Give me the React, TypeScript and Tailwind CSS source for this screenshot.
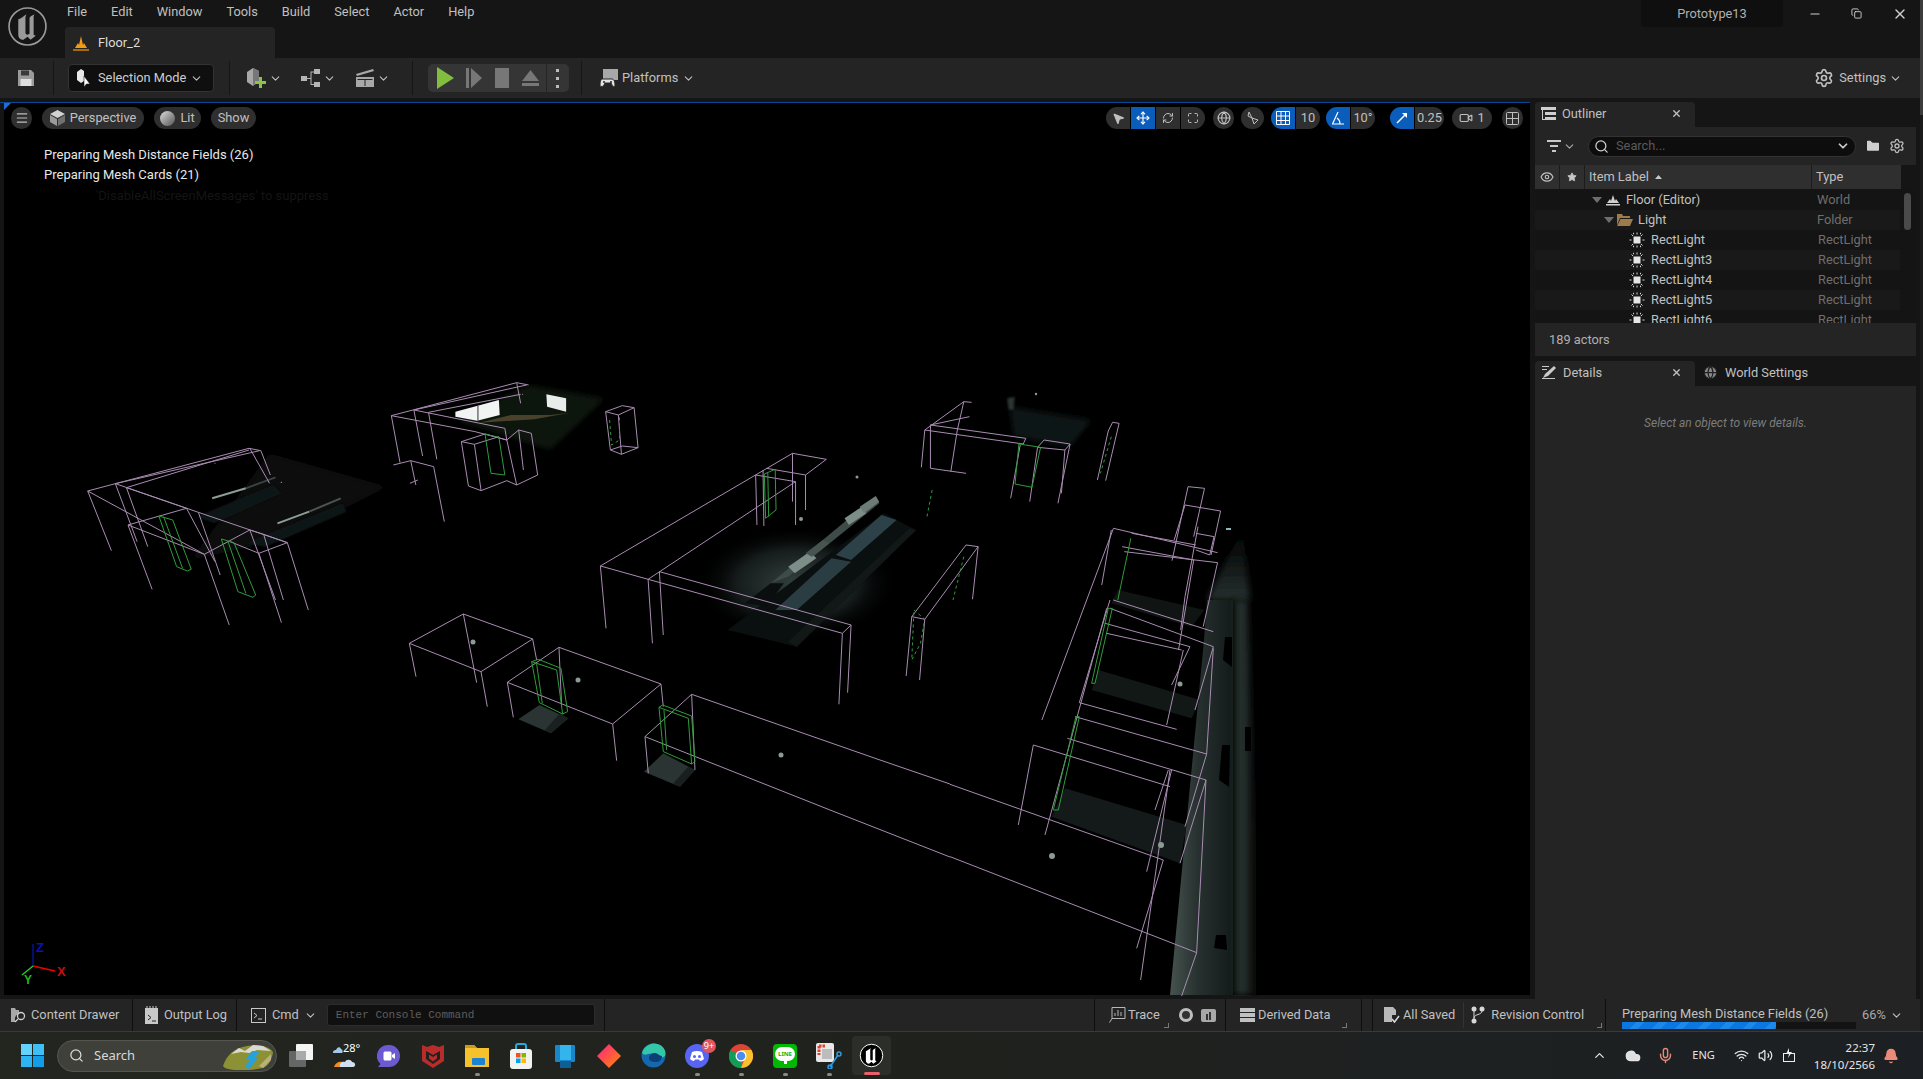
import React from "react";
import {
  ChevronDown,
  ChevronUp,
  Eye,
  Globe,
  Maximize,
  Menu,
  Minus,
  MousePointer2,
  Move,
  RefreshCw,
  Search,
  Settings,
  Star,
  Video,
  Volume2,
  Wifi,
  X,
  Mic,
  Bell,
  Copy,
  FolderPlus,
  Cloud,
} from "lucide-react";

/* ================= SCENE DATA (points are in crop space, see groups below) ================= */
const PURPLE = "#a98cb2";
const GREEN = "#2f9c3c";

const leftRoomLines = [
  "70,393 478,265 508,272",
  "140,371 505,272",
  "168,383 478,270",
  "70,393 365,583 480,510",
  "140,371 350,457 575,548 503,580 430,545",
  "168,383 320,445 172,495 365,583",
  "515,523 480,510",
  "515,523 575,548",
  "70,393 130,572",
  "140,371 195,545",
  "168,383 222,560",
  "172,495 233,688",
  "320,445 392,605",
  "350,457 405,645",
  "365,583 428,795",
  "503,580 560,788",
  "575,548 628,750",
  "515,523 565,720",
  "480,510 545,720",
  "480,265 530,370",
  "508,272 532,345",
  "838,167 1155,68 1185,75",
  "895,150 1180,75",
  "932,157 1165,103",
  "838,167 1050,215 1130,240",
  "895,150 1125,205 1130,240",
  "838,167 860,308",
  "895,150 917,288",
  "932,157 953,298",
  "1155,68 1165,130",
  "1015,245 1075,222 1130,240 1160,210 1192,220 1208,345 1155,375 1130,362 1065,392 1033,378 1015,245",
  "1015,245 1048,253 1110,230",
  "1048,253 1065,392",
  "1130,240 1155,375",
  "1160,210 1172,330",
  "843,315 887,302 945,320 972,485",
  "887,302 900,375",
  "885,370 905,360",
  "1380,155 1422,137 1452,143 1462,263 1420,283 1392,270 1380,155",
  "1380,155 1412,165 1452,143",
  "1412,165 1420,283",
  "1392,270 1422,258 1462,263",
];
const leftRoomGreen = [
  "250,468 285,480 332,628 322,633 295,620 250,468",
  "262,470 310,625",
  "408,537 440,548 495,705 488,712 450,695 408,537",
  "425,545 470,700",
  "1075,222 1110,232 1125,345 1090,340 1075,222",
];

const centerLines = [
  "47,588 490,250 568,268 520,315 430,295",
  "157,628 497,335",
  "47,588 157,628",
  "183,605 625,765",
  "157,628 605,790 625,765",
  "47,588 60,775",
  "157,628 167,820",
  "183,605 192,795",
  "605,790 597,1003",
  "625,765 617,968",
  "405,315 408,465",
  "422,300 424,468",
  "490,250 490,395",
  "520,315 520,420",
  "497,335 497,465",
  "405,315 497,335",
  "765,740 890,525 918,530 795,748 765,740",
  "765,740 752,918",
  "795,748 783,930",
  "918,530 905,688",
  "795,180 885,95 903,97",
  "808,165 898,140",
  "795,180 1022,222 1028,205 808,165",
  "795,180 787,292",
  "808,165 808,295 890,310",
  "885,95 870,180 855,305",
  "1070,210 1130,222 1118,240 1055,232 1070,210",
  "1130,222 1102,400",
  "1118,240 1110,370",
  "1055,232 1037,395",
  "1015,225 993,385",
  "1218,183 1228,157 1243,160 1212,332",
  "1218,183 1193,330",
  "1402,350 1440,355 1415,500",
  "1402,350 1365,572",
  "1395,405 1477,423 1455,555",
  "1395,405 1370,510",
  "1420,490 1462,500 1452,555 1420,540",
  "1230,475 1065,1050",
  "1230,475 1470,548",
  "1272,490 1420,525",
  "1250,530 1415,570",
  "1255,545 1470,578",
  "1470,578 1437,770",
  "1425,470 1395,680 1385,780",
  "1415,570 1380,840",
  "1225,480 1203,645",
];
const centerGreen = [
  "425,312 450,298 452,420 428,445 425,312",
  "433,308 435,440",
  "1012,222 1062,232 1042,352 1003,342 1012,222",
  "1270,505 1240,690",
];
const centerGreenDash = [
  "770,720 795,748 785,820 765,870 770,720",
  "885,560 860,690",
  "812,360 800,440",
  "1225,200 1200,310",
];

const rightLines = [
  "250,435 205,675",
  "250,435 660,560",
  "388,308 680,388",
  "375,350 770,462",
  "352,415 768,540",
  "0,553 640,780",
  "0,770 740,1058 695,1188",
  "768,540 740,1058",
  "770,462 705,680",
  "768,540 690,790",
  "790,140 735,330",
  "790,145 770,462",
  "490,0 790,95",
  "480,25 790,140",
  "465,70 720,140",
  "470,100 695,150",
  "470,25 285,705",
  "660,510 572,1140",
  "640,780 560,1045",
  "700,150 650,375",
  "665,510 590,815",
  "655,510 615,630",
  "720,140 665,255",
  "480,0 388,308",
];
const rightGreen = [
  "475,25 425,250 435,250 487,25 475,25",
  "378,350 310,630 325,630 388,350 378,350",
];

const boxLines = [
  "88,160 250,72 458,147 303,245 88,160",
  "88,160 108,260",
  "250,72 290,278",
  "303,245 322,350",
  "458,147 470,210",
  "382,277 537,172 843,282 698,402 382,277",
  "382,277 400,382",
  "537,172 545,350",
  "698,402 710,512",
  "843,282 850,350",
  "795,440 935,313 1500,510 1710,582",
  "795,440 1350,660 1710,801",
  "795,440 805,550",
  "935,313 945,540",
];
const boxGreen = [
  "455,215 475,208 543,235 563,365 548,372 478,338 455,215",
  "455,215 530,240 548,372",
  "470,222 487,340",
  "837,352 848,345 935,378 945,515 935,522 850,485 837,352",
  "837,352 925,385 935,522",
  "852,360 860,480",
];

function Wires({ lines, color, dash }: { lines: string[]; color: string; dash?: string }) {
  return (
    <>
      {lines.map((p, i) => (
        <polyline
          key={i}
          points={p}
          fill="none"
          stroke={color}
          strokeWidth={1}
          strokeDasharray={dash}
          vectorEffect="non-scaling-stroke"
        />
      ))}
    </>
  );
}

function Dot({ x, y, r = 2.5 }: { x: number; y: number; r?: number }) {
  return <circle cx={x} cy={y} r={r} fill="#8d9a96" />;
}

/* ================= VIEWPORT DRAWING ================= */
function Scene() {
  return (
    <svg className="absolute inset-0" width={1526} height={893} viewBox="4 103 1526 893">
      <defs>
        <filter id="soft" x="-30%" y="-30%" width="160%" height="160%">
          <feGaussianBlur stdDeviation="9" />
        </filter>
        <filter id="softer" x="-30%" y="-30%" width="160%" height="160%">
          <feGaussianBlur stdDeviation="3" />
        </filter>
        <linearGradient id="wall" x1="0" y1="0" x2="1" y2="0">
          <stop offset="0" stopColor="#46534f" />
          <stop offset="0.45" stopColor="#26302e" />
          <stop offset="1" stopColor="#141b1a" />
        </linearGradient>
        <linearGradient id="wall2" x1="0" y1="0" x2="1" y2="0">
          <stop offset="0" stopColor="#1a2220" />
          <stop offset="0.35" stopColor="#2a3432" />
          <stop offset="1" stopColor="#000" />
        </linearGradient>
        <linearGradient id="wallTop" x1="0" y1="1" x2="0" y2="0">
          <stop offset="0" stopColor="#26302e" />
          <stop offset="1" stopColor="#000" />
        </linearGradient>
        <radialGradient id="glow">
          <stop offset="0" stopColor="#33413f" />
          <stop offset="0.6" stopColor="#161c1c" />
          <stop offset="1" stopColor="#000" stopOpacity="0" />
        </radialGradient>
      </defs>

      {/* long wall on the right */}
      <polygon points="1226,560 1243,530 1250,600 1207,600" fill="url(#wallTop)" filter="url(#softer)" />
      <polygon points="1170,995 1204,640 1207,600 1233,600 1233,995" fill="url(#wall)" />
      <polygon points="1234,600 1248,600 1255,830 1257,995 1234,995" fill="url(#wall2)" filter="url(#softer)" />
      <g fill="#000">
        <polygon points="1225,637 1232,637 1232,667 1223,660" />
        <polygon points="1222,745 1230,745 1229,787 1219,780" />
        <polygon points="1216,935 1226,935 1227,950 1214,948" />
        <rect x="1245" y="727" width="6" height="24" />
      </g>

      {/* dim room floors */}
      <g transform="translate(950 600) scale(0.3333)">
        <polygon points="445,210 750,300 725,355 425,270" fill="#121816" />
        <polygon points="345,565 710,675 690,790 305,650" fill="#141a19" />
      </g>
      <g transform="translate(580 370) scale(0.4337 0.3333)">
        <polygon points="1240,660 1440,720 1410,770 1225,700" fill="#101513" />
        <polygon points="990,110 1180,150 1130,230 1000,200" fill="#111615" filter="url(#soft)" />
        <polygon points="985,85 1002,80 1000,120 988,118" fill="#2a3532" filter="url(#softer)" />

        {/* lit central room */}
        <ellipse cx="500" cy="640" rx="230" ry="170" fill="url(#glow)" />
        <polygon points="340,780 700,430 775,480 500,830" fill="#0a0f0f" />
        <polygon points="590,555 695,435 730,450 625,570" fill="#2d4149" />
        <polygon points="450,720 580,565 625,575 500,720" fill="#2a3d43" />
        <polygon points="500,830 775,480 760,475 480,815" fill="#121816" />
        <polygon points="440,640 680,380 690,400 480,620" fill="#3e4b48" />
        <polygon points="380,700 440,640 470,640 430,710" fill="#0a0e0e" />
        <polygon points="480,590 530,545 545,565 495,610" fill="#7d8d88" />
        <polygon points="520,550 560,510 575,520 535,560" fill="#48544f" />
        <polygon points="610,445 650,410 660,430 620,465" fill="#7d8d88" />
        <polygon points="645,410 682,378 690,395 655,430" fill="#6d7c77" />
      </g>

      {/* left rooms */}
      <g transform="translate(60 360) scale(0.3954 0.3333)">
        <polygon points="530,280 830,380 560,540 330,600" fill="#080c0b" filter="url(#soft)" />
        <polygon points="345,470 540,375 560,400 390,490" fill="#0d1414" filter="url(#softer)" />
        <polygon points="470,550 715,430 725,455 520,560" fill="#0d1414" filter="url(#softer)" />
        <polyline points="385,415 470,385" stroke="#8d9c97" strokeWidth={2} fill="none" vectorEffect="non-scaling-stroke" />
        <polyline points="470,385 545,352" stroke="#3a4442" strokeWidth={2} fill="none" vectorEffect="non-scaling-stroke" />
        <polyline points="550,490 630,455" stroke="#8d9c97" strokeWidth={2} fill="none" vectorEffect="non-scaling-stroke" />
        <polyline points="630,455 710,415" stroke="#4a5552" strokeWidth={2} fill="none" vectorEffect="non-scaling-stroke" />

        {/* top room with the bright windows */}
        <polygon points="1185,75 1380,115 1240,270 1000,180" fill="#0e1211" filter="url(#soft)" />
        <polygon points="1060,188 1140,165 1240,165 1290,158 1200,178" fill="#4a412c" />
        <polygon points="1000,155 1110,120 1112,165 1055,182 1000,170" fill="#f2f4f3" />
        <polygon points="1230,103 1280,115 1280,155 1232,140" fill="#e8ecea" />
        <line x1="1057" y1="138" x2="1057" y2="182" stroke="#333" vectorEffect="non-scaling-stroke" />
        <Wires lines={leftRoomLines} color={PURPLE} />
        <Wires lines={leftRoomGreen} color={GREEN} />
        <Wires lines={["1390,180 1395,255 1415,240 1415,170"]} color={GREEN} dash="3 3" />
        <Dot x={392} y={310} r={1.5} />
        <Dot x={560} y={367} r={2} />
        <Dot x={1170} y={103} r={1.5} />
      </g>

      <g transform="translate(580 370) scale(0.4337 0.3333)">
        <Wires lines={centerLines} color={PURPLE} />
        <Wires lines={centerGreen} color={GREEN} />
        <Wires lines={centerGreenDash} color={GREEN} dash="3 3" />
      </g>
      <Dot x={857} y={477} r={1.5} />
      <Dot x={801} y={519} r={2} />
      <Dot x={1036} y={394} r={1.2} />
      <rect x="1226" y="528" width="5" height="2" fill="#8fb5bd" />

      <g transform="translate(950 600) scale(0.3333)">
        <Wires lines={rightLines} color={PURPLE} />
        <Wires lines={rightGreen} color={GREEN} />
      </g>
      <Dot x={1180} y={684} r={2.5} />
      <Dot x={1161} y={845} r={3} />
      <Dot x={1052} y={856} r={3} />

      <g transform="translate(380 590) scale(0.3333)">
        <polygon points="415,388 478,345 565,385 513,430" fill="#2a3432" />
        <polygon points="513,430 565,385 540,370 495,420" fill="#1a201f" />
        <polygon points="792,545 850,490 945,540 900,590" fill="#2a3432" />
        <polygon points="900,590 945,540 925,530 880,580" fill="#191f1e" />
        <Wires lines={boxLines} color={PURPLE} />
        <Wires lines={boxGreen} color={GREEN} />
      </g>
      <Dot x={473} y={642} r={2.5} />
      <Dot x={578} y={680} r={2.5} />
      <Dot x={781} y={755} r={2.5} />

      {/* axis gizmo */}
      <line x1="33" y1="966" x2="33" y2="944" stroke="#0b1bd6" strokeWidth={1} />
      <line x1="33" y1="966" x2="55" y2="971" stroke="#e00" strokeWidth={1.4} />
      <line x1="33" y1="966" x2="22" y2="975" stroke="#1fd31f" strokeWidth={1.4} />
      <text x="36" y="952" fill="#0a14b8" fontSize="13" fontFamily="Liberation Sans" fontWeight="700">Z</text>
      <text x="57" y="976" fill="#c41010" fontSize="13" fontFamily="Liberation Sans" fontWeight="700">X</text>
      <text x="24" y="984" fill="#1fb81f" fontSize="12" fontFamily="Liberation Sans" fontWeight="700">Y</text>
    </svg>
  );
}

/* ================= SMALL ICONS ================= */
function UnrealLogo({ size, ring = "#9a9a9a", fg = "#9a9a9a", bg = "transparent" }: { size: number; ring?: string; fg?: string; bg?: string }) {
  return (
    <svg width={size} height={size} viewBox="0 0 40 40">
      <circle cx="20" cy="20" r="18" fill={bg} stroke={ring} strokeWidth="1.6" />
      <path
        d="M11 13c3-1 5-3 8-5-1 2-1 3-1 5v13c0 1 1 2 2 2l2-1V12c0-1 1-2 3-3l2-1c-1 1-1 2-1 4v16l2 1-5 4-3-3-4 3c-3 0-5-2-5-5V15z"
        fill={fg}
      />
    </svg>
  );
}

function SaveIcon() {
  return (
    <svg width="18" height="18" viewBox="0 0 18 18">
      <path d="M1 1h13l3 3v13H1z" fill="#9b9b9b" />
      <rect x="4" y="1.5" width="8" height="5" fill="#3a3a3a" />
      <rect x="3.5" y="10" width="11" height="7" fill="#dedede" />
    </svg>
  );
}

function SelectionIcon() {
  return (
    <svg width="16" height="20" viewBox="0 0 16 20">
      <path d="M1 4l4-3 3 2v10l-3 2-4-3z" fill="#e8e8e8" />
      <path d="M8 8v11l2.500-3 3.500 0z" fill="#fff" stroke="#111" strokeWidth="0.6" />
    </svg>
  );
}

function AddActorIcon() {
  return (
    <svg width="22" height="22" viewBox="0 0 22 22">
      <path d="M2 5l6-4 6 3v10l-6 5-6-4z" fill="#a8a8a8" />
      <path d="M8 1l6 3v10l-6 5z" fill="#777" />
      <path d="M14 10h3v4h4v3h-4v4h-3v-4h-4v-3h4z" fill="#8bc34a" />
    </svg>
  );
}

function BlueprintIcon() {
  return (
    <svg width="20" height="18" viewBox="0 0 20 18" fill="#b5b5b5">
      <rect x="0" y="7" width="6" height="5" />
      <rect x="13" y="0" width="6" height="5" />
      <rect x="13" y="13" width="6" height="5" />
      <path d="M6 9h3.500V2.500H13v1h-2.500V9.500h0V15H13v1H9.500V10H6z" />
    </svg>
  );
}

function CinematicIcon() {
  return (
    <svg width="20" height="20" viewBox="0 0 20 20" fill="#a8a8a8">
      <path d="M1 6l17-5 1 2-17 5z" />
      <rect x="1" y="9" width="18" height="10" />
      <rect x="2.500" y="11" width="15" height="1" fill="#242424" />
      <rect x="9.500" y="12" width="1" height="6" fill="#242424" />
    </svg>
  );
}

function PlatformsIcon() {
  return (
    <svg width="20" height="20" viewBox="0 0 20 20">
      <rect x="4" y="1" width="15" height="11" fill="#a8a8a8" />
      <path d="M3 11h10c2 0 3 3 3 6 0 2-2 2-3 0l-1-2H6l-1 2c-1 2-4 2-4 0 0-3 1-6 2-6z" fill="#e2e2e2" stroke="#242424" />
      <circle cx="5" cy="14" r="1" fill="#242424" />
      <circle cx="12" cy="14" r="1" fill="#242424" />
    </svg>
  );
}

function LandscapeIcon() {
  return (
    <svg width="14" height="12" viewBox="0 0 14 12" fill="#cfcfcf">
      <path d="M1 9l3-4 1 2 2-6 2 6 1-2 3 4z" />
      <rect x="0" y="10" width="14" height="1.500" />
    </svg>
  );
}

function LightIcon() {
  return (
    <svg width="16" height="16" viewBox="0 0 16 16" stroke="#d5d5d5" strokeWidth="1" fill="none">
      <rect x="4.500" y="4.500" width="7" height="7" fill="#e6e6e6" stroke="none" />
      <path d="M8 0.500v2M8 13.500v2M0.500 8h2M13.500 8h2M2.500 2.500l1.500 1.500M13.500 2.500l-1.500 1.500M2.500 13.500l1.500-1.500M13.500 13.500l-1.500-1.500M4.500 0.800v1.500M11.500 0.800v1.500M4.500 13.700v1.500M11.500 13.700v1.500" />
    </svg>
  );
}

function OutlinerIcon() {
  return (
    <svg width="15" height="15" viewBox="0 0 15 15" fill="#cfcfcf">
      <rect x="0" y="1" width="15" height="3" />
      <rect x="4" y="6" width="11" height="3" />
      <rect x="4" y="11" width="11" height="3" />
      <path d="M1 4h1v9h2v1H1z" />
    </svg>
  );
}

function DetailsIcon() {
  return (
    <svg width="16" height="15" viewBox="0 0 16 15" fill="#c9c9c9">
      <rect x="2" y="1" width="7" height="1" />
      <rect x="2" y="4" width="5" height="1" />
      <rect x="2" y="13" width="13" height="1" />
      <path d="M14 1l2 2-8 8-4 1.500-1.500 1.500 1-2 1.500-3z" />
    </svg>
  );
}

function StatusSep() {
  return <div className="w-px self-stretch bg-[#0e0e0e]" />;
}

/* ================= TASKBAR ICONS ================= */
function TaskIcon({ children, dot }: { children: React.ReactNode; dot?: boolean }) {
  return (
    <div className="relative flex h-full w-[44px] items-center justify-center">
      {children}
      {dot && <div className="absolute bottom-[3px] h-[3px] w-[5px] rounded-full bg-[#8a8a8a]" />}
    </div>
  );
}

function Taskbar() {
  return (
    <div className="flex h-[47px] items-center bg-gradient-to-r from-[#23261f] via-[#1f211d] to-[#1c2024] text-white font-['Noto_Sans',sans-serif]">
      <div className="ml-[21px] grid h-[23px] w-[23px] grid-cols-2 gap-[1px]">
        <div className="bg-[#63d3fb]" />
        <div className="bg-[#3cc0f6]" />
        <div className="bg-[#2eb4f2]" />
        <div className="bg-[#129de6]" />
      </div>
      <div className="ml-[13px] flex h-[32px] w-[220px] items-center rounded-full border border-[#54564f] bg-[#3e4039] pl-[11px] pr-[3px]">
        <Search size={15} className="text-[#dcdcdc]" />
        <span className="ml-[10px] text-[13px] text-[#d8d8d8]">Search</span>
        <svg className="ml-auto" width="50" height="28" viewBox="0 0 50 28">
          <path d="M0 24C4 12 12 6 24 4s22 0 26 6c-1 8-5 14-10 16-14 3-30 3-38 0z" fill="#8c9136" />
          <path d="M8 12l8-6 6 3 8-6 10 1 8 5-14-1-8 3-8-1z" fill="#dad8d2" />
          <path d="M22 24l6-7-5 0 6-8 8 0-5 6 4 0-10 12z" fill="#25a3d8" />
          <path d="M36 24l12-12 0 6-8 8z" fill="#b9b07c" />
        </svg>
      </div>
      <div className="ml-[2px] flex h-full items-center">
        <TaskIcon>
          <svg width="25" height="23" viewBox="0 0 25 23">
            <rect x="0" y="7" width="17" height="16" rx="1" fill="#666" />
            <rect x="7" y="0" width="17" height="16" rx="1" fill="#f4f4f4" />
            <rect x="7" y="7" width="10" height="9" fill="#a9a9a9" />
          </svg>
        </TaskIcon>
        <TaskIcon>
          <div className="relative h-[26px] w-[26px]">
            <svg className="absolute left-0 top-0" width="26" height="26" viewBox="0 0 26 26">
              <path d="M1 10c0-3 2-3 3-3 1-3 4-4 5-1 2 0 2 4 1 4z" fill="#a4c6e8" />
              <path d="M2 24c1-4 5-6 8-5l-2 5z" fill="#f08c1e" />
              <path d="M8 24c-1-4 2-6 5-5 1-3 6-3 7 0 4 0 4 5 1 5z" fill="#cfe0f0" />
            </svg>
            <span className="absolute left-[11px] top-[-2px] text-[11px] leading-[14px]">28°</span>
          </div>
        </TaskIcon>
        <TaskIcon>
          <svg width="24" height="24" viewBox="0 0 24 24">
            <path d="M12 1a11 11 0 0 1 0 22H1l2.500-3A11 11 0 0 1 12 1z" fill="#6b5bd0" />
            <rect x="6.500" y="7.500" width="8" height="9" rx="1.500" fill="#fff" />
            <path d="M15 11l3-2v6l-3-2z" fill="#fff" />
          </svg>
        </TaskIcon>
        <TaskIcon>
          <svg width="22" height="24" viewBox="0 0 22 24">
            <path d="M0 1l5 2 6-2 6 2 5-2v16l-11 7L0 17z" fill="#b82c2c" />
            <path d="M4 7l7 4 7-4v8l-7 5-7-5z" fill="#1f211d" />
            <path d="M7 10.500l4 2.500 4-2.500v4l-4 3-4-3z" fill="#b82c2c" />
          </svg>
        </TaskIcon>
        <TaskIcon dot>
          <svg width="24" height="23" viewBox="0 0 24 23">
            <path d="M0 1h9l3 3h12v19H0z" fill="#f5c22d" />
            <path d="M0 1h9l3 3H0z" fill="#c99a1c" />
            <rect x="7" y="14" width="13" height="7" rx="1" fill="#1c83d2" />
          </svg>
        </TaskIcon>
        <TaskIcon>
          <svg width="24" height="26" viewBox="0 0 24 26">
            <path d="M7 6V3q0-2 2-2h6q2 0 2 2v3" fill="none" stroke="#29a8e0" strokeWidth="2" />
            <rect x="1" y="6" width="22" height="20" rx="3" fill="#f2f2f2" />
            <rect x="7" y="10" width="4.500" height="4.500" fill="#f25022" />
            <rect x="12.500" y="10" width="4.500" height="4.500" fill="#7fba00" />
            <rect x="7" y="15.500" width="4.500" height="4.500" fill="#00a4ef" />
            <rect x="12.500" y="15.500" width="4.500" height="4.500" fill="#ffb900" />
          </svg>
        </TaskIcon>
        <TaskIcon>
          <svg width="24" height="24" viewBox="0 0 24 24">
            <rect x="2" y="1" width="20" height="17" rx="1" fill="#1a86c8" />
            <rect x="7" y="1" width="11" height="15" fill="#33b4ec" />
            <rect x="7" y="17" width="11" height="7" fill="#0f5e96" />
          </svg>
        </TaskIcon>
        <TaskIcon>
          <svg width="24" height="24" viewBox="0 0 24 24">
            <defs>
              <linearGradient id="gem" x1="0" y1="0" x2="1" y2="1">
                <stop offset="0" stopColor="#ff1f8a" />
                <stop offset="1" stopColor="#ff8a00" />
              </linearGradient>
            </defs>
            <path d="M12 0l12 12-12 12L0 12z" fill="url(#gem)" />
          </svg>
        </TaskIcon>
        <TaskIcon>
          <svg width="25" height="25" viewBox="0 0 25 25">
            <circle cx="12.500" cy="12.500" r="12" fill="#1568ab" />
            <path d="M1 10C3 3 9 .5 13 .5c6 0 11.500 4 11.500 10 0 4-4 5-7 4-3-1-3-4-7-4-4 0-7 3-9.500-.5z" fill="#34c6a8" />
            <path d="M8 15c0-3 3-5 6-5 3 0 4 3 7 3 0 4-3 6-6 6-4 0-7-1-7-4z" fill="#0c3f78" />
          </svg>
        </TaskIcon>
        <TaskIcon dot>
          <div className="relative">
            <svg width="24" height="24" viewBox="0 0 24 24">
              <circle cx="12" cy="12" r="12" fill="#5865f2" />
              <path d="M7 8q5-2 10 0l2 7q-2 2-4 2l-1-1.500h-4L9 17q-2 0-4-2z" fill="#fff" />
              <circle cx="9.500" cy="12.500" r="1.500" fill="#5865f2" />
              <circle cx="14.500" cy="12.500" r="1.500" fill="#5865f2" />
            </svg>
            <span className="absolute right-[-7px] top-[-5px] flex h-[14px] w-[14px] items-center justify-center rounded-full bg-[#e0555e] text-[9px] leading-none">9+</span>
          </div>
        </TaskIcon>
        <TaskIcon dot>
          <svg width="24" height="24" viewBox="0 0 24 24">
            <circle cx="12" cy="12" r="12" fill="#db4437" />
            <path d="M12 12L1.600 18A12 12 0 0 1 1.600 6z" fill="#0f9d58" />
            <path d="M12 24A12 12 0 0 1 1.600 18L7 12h5z" fill="#0f9d58" />
            <path d="M12 24A12 12 0 0 0 22.400 6H12l5 6z" fill="#fbc02d" />
            <circle cx="12" cy="12" r="5.500" fill="#fff" />
            <circle cx="12" cy="12" r="4.300" fill="#4a8cf0" />
          </svg>
        </TaskIcon>
        <TaskIcon dot>
          <div className="flex h-[24px] w-[24px] flex-col items-center justify-center rounded-[4px] bg-[#00b900]">
            <div className="flex h-[14px] w-[20px] items-center justify-center rounded-full bg-white text-[6px] font-bold leading-none text-[#00b900]">LINE</div>
            <div className="h-[3px] w-[3px] bg-white" />
          </div>
        </TaskIcon>
        <TaskIcon dot>
          <svg width="26" height="26" viewBox="0 0 26 26">
            <rect x="0" y="0" width="18" height="19" rx="2" fill="#e8e8e8" />
            <path d="M3 3h7M3 3v9" stroke="#d8452e" strokeWidth="3" strokeDasharray="2.500 1" fill="none" />
            <path d="M6 6h10v10H6z" fill="#bcbcbc" />
            <path d="M14 24l8-12" stroke="#2e9be0" strokeWidth="1.500" />
            <circle cx="23" cy="11" r="2" fill="none" stroke="#2e9be0" strokeWidth="1.500" />
            <circle cx="14" cy="24" r="2" fill="none" stroke="#2e9be0" strokeWidth="1.500" />
          </svg>
        </TaskIcon>
        <div className="relative ml-[1px] flex h-[39px] w-[39px] items-center justify-center rounded-[4px] bg-[#2c2e2a]">
          <UnrealLogo size={25} ring="#ffffff" fg="#ffffff" bg="#000000" />
          <div className="absolute bottom-0 h-[3px] w-[16px] rounded-full bg-[#e8606a]" />
        </div>
      </div>

      <div className="ml-auto flex items-center pr-[24px] text-[#e6e6e6]">
        <ChevronUp size={15} className="mr-[18px]" />
        <Cloud size={16} fill="#e0e0e0" className="mr-[16px]" />
        <Mic size={17} className="mr-[18px] text-[#e58a7a]" />
        <span className="mr-[19px] text-[11px]">ENG</span>
        <Wifi size={15} className="mr-[9px]" />
        <Volume2 size={15} className="mr-[8px]" />
        <svg className="mr-[17px]" width="16" height="16" viewBox="0 0 16 16" fill="none" stroke="#eee">
          <rect x="2.500" y="5.500" width="11" height="8" />
          <path d="M8 0L5 6h3l-1 4 4-6H8z" fill="#eee" stroke="none" />
        </svg>
        <div className="flex flex-col items-end text-[11.500px] leading-[17px]">
          <span>22:37</span>
          <span>18/10/2566</span>
        </div>
        <Bell size={16} fill="#ea8a78" className="ml-[8px] text-[#ea8a78]" />
      </div>
    </div>
  );
}

/* ================= VIEWPORT TOOLBAR ================= */
function Chip({ className, children }: { className: string; children: React.ReactNode }) {
  return <div className={`flex h-[22px] items-center justify-center bg-[#2f2f2f] text-[#c0c0c0] ${className}`}>{children}</div>;
}

function ViewportBar() {
  return (
    <div className="absolute left-[7px] right-[7px] top-[4px] flex h-[22px] items-center text-[12.800px] text-[#c0c0c0]">
      <Chip className="w-[21px] rounded-full">
        <Menu size={14} />
      </Chip>
      <Chip className="ml-[10px] w-[102px] gap-[5px] rounded-full">
        <svg width="15" height="16" viewBox="0 0 15 16">
          <path d="M7.500 0L15 4l-7.500 4L0 4z" fill="#d2d2d2" />
          <path d="M0 5l7 4v7l-7-4z" fill="#9a9a9a" />
          <path d="M15 5l-7 4v7l7-4z" fill="#707070" />
        </svg>
        Perspective
      </Chip>
      <Chip className="ml-[10px] w-[47px] gap-[5px] rounded-full">
        <span className="h-[15px] w-[15px] rounded-full bg-gradient-to-br from-[#e0e0e0] to-[#555]" />
        Lit
      </Chip>
      <Chip className="ml-[10px] w-[45px] rounded-full">Show</Chip>

      <div className="ml-auto flex h-[22px] items-center">
        <div className="flex gap-px">
          <Chip className="w-[24px] rounded-l-full">
            <MousePointer2 size={13} fill="#c0c0c0" />
          </Chip>
          <Chip className="w-[24px] !bg-[#0a5dbb] !text-white">
            <Move size={14} />
          </Chip>
          <Chip className="w-[24px]">
            <RefreshCw size={12} />
          </Chip>
          <Chip className="w-[24px] rounded-r-full">
            <Maximize size={12} />
          </Chip>
        </div>
        <Chip className="ml-[8px] w-[21px] rounded-full">
          <Globe size={14} />
        </Chip>
        <Chip className="ml-[7px] w-[23px] rounded-full">
          <svg width="14" height="14" viewBox="0 0 14 14" fill="none" stroke="#c0c0c0">
            <path d="M3 1l3 6 6 2-4 4-2-6-4-2z" />
          </svg>
        </Chip>
        <div className="ml-[7px] flex gap-px">
          <Chip className="w-[24px] rounded-l-full !bg-[#0a5dbb] !text-white">
            <svg width="14" height="14" viewBox="0 0 14 14" fill="none" stroke="#fff">
              <path d="M.5.500h13v13H.500zM.5 5h13M.5 9.500h13M5 .5v13M9.500.5v13" />
            </svg>
          </Chip>
          <Chip className="w-[24px] rounded-r-full">10</Chip>
        </div>
        <div className="ml-[6px] flex gap-px">
          <Chip className="w-[24px] rounded-l-full !bg-[#0a5dbb] !text-white">
            <svg width="14" height="14" viewBox="0 0 14 14" fill="none" stroke="#fff" strokeWidth="1.200">
              <path d="M1 13h12M1.500 13L7 1M6 7q3 2 3 6" />
            </svg>
          </Chip>
          <Chip className="w-[24px] rounded-r-full">10°</Chip>
        </div>
        <div className="ml-[15px] flex gap-px">
          <Chip className="w-[24px] rounded-l-full !bg-[#0a5dbb] !text-white">
            <svg width="14" height="14" viewBox="0 0 14 14" fill="#fff" stroke="#fff">
              <path d="M2 12L11 3" strokeWidth="1.400" />
              <path d="M7 2h5v5z" stroke="none" />
            </svg>
          </Chip>
          <Chip className="w-[29px] rounded-r-full">0.25</Chip>
        </div>
        <Chip className="ml-[8px] w-[40px] gap-[4px] rounded-full">
          <Video size={14} />1
        </Chip>
        <Chip className="ml-[10px] w-[21px] rounded-full">
          <svg width="13" height="13" viewBox="0 0 13 13" fill="none" stroke="#c0c0c0">
            <rect x=".5" y=".5" width="12" height="12" rx="1" />
            <path d="M.5 6.500h12M6.500.5v12" />
          </svg>
        </Chip>
      </div>
    </div>
  );
}

/* ================= OUTLINER ================= */
const lights = ["RectLight", "RectLight3", "RectLight4", "RectLight5", "RectLight6"];

function Outliner() {
  return (
    <div className="flex flex-col">
      <div className="flex h-[25px]">
        <div className="flex w-[160px] items-center rounded-t-[4px] bg-[#242424] pb-[2px] pl-[6px] pr-[13px] text-[#c0c0c0]">
          <OutlinerIcon />
          <span className="ml-[6px] flex-1 text-[12.800px]">Outliner</span>
          <X size={11} strokeWidth={3} />
        </div>
      </div>
      <div className="flex h-[38px] items-center bg-[#242424] pl-[12px] text-[#c8c8c8]">
        <svg width="14" height="12" viewBox="0 0 14 12" fill="#c8c8c8">
          <rect x="0" y="0" width="14" height="2" />
          <rect x="3" y="5" width="8" height="2" />
          <rect x="5" y="10" width="4" height="2" />
        </svg>
        <ChevronDown size={13} className="ml-[2px] text-[#aaa]" />
        <div className="ml-[12px] flex h-[21px] w-[268px] items-center rounded-full border border-[#333] bg-[#0d0d0d] pl-[5px] pr-[5px]">
          <Search size={15} className="text-[#d0d0d0]" />
          <span className="ml-[7px] flex-1 text-[12.800px] text-[#5a5a5a]">Search...</span>
          <ChevronDown size={14} strokeWidth={3} className="text-[#cfcfcf]" />
        </div>
        <FolderPlus size={16} fill="#d0d0d0" stroke="#242424" className="ml-[9px]" />
        <Settings size={16} className="ml-[8px] text-[#bdbdbd]" />
      </div>
      <div className="flex h-[24px] w-[366px] bg-[#2f2f2f] text-[12.800px] text-[#c0c0c0]">
        <div className="flex w-[24px] items-center justify-center">
          <Eye size={14} />
        </div>
        <div className="flex w-[25px] items-center justify-center border-l border-[#1c1c1c]">
          <Star size={10} fill="#c8c8c8" />
        </div>
        <div className="flex w-[227px] items-center border-l border-[#1c1c1c] pl-[4px]">
          Item Label
          <svg className="ml-[6px]" width="7" height="4" viewBox="0 0 7 4" fill="#c8c8c8">
            <path d="M3.500 0L7 4H0z" />
          </svg>
        </div>
        <div className="flex flex-1 items-center border-l border-[#1c1c1c] pl-[4px]">Type</div>
      </div>
      <div className="relative h-[134px] overflow-hidden bg-[#141414] pt-[1px] text-[12.800px] text-[#c0c0c0]">
        <div className="absolute right-[5px] top-[4px] h-[37px] w-[7px] rounded-full bg-[#4a4a4a]" />
        <div className="flex h-[20px] w-[365px] items-center">
          <svg className="ml-[57px]" width="10" height="6" viewBox="0 0 10 6" fill="#6e6e6e">
            <path d="M0 0h10L5 6z" />
          </svg>
          <span className="ml-[4px]">
            <LandscapeIcon />
          </span>
          <span className="ml-[6px] w-[191px]">Floor (Editor)</span>
          <span className="text-[#6e6e6e]">World</span>
        </div>
        <div className="flex h-[20px] w-[365px] items-center bg-[#191919]">
          <svg className="ml-[69px]" width="10" height="6" viewBox="0 0 10 6" fill="#6e6e6e">
            <path d="M0 0h10L5 6z" />
          </svg>
          <svg className="ml-[3px]" width="16" height="12" viewBox="0 0 16 12" fill="#9d7b4a">
            <path d="M0 0h5l1 2h7v2H3L0 11z" />
            <path d="M3.500 5H16l-3 7H0z" />
          </svg>
          <span className="ml-[5px] w-[179px]">Light</span>
          <span className="text-[#6e6e6e]">Folder</span>
        </div>
        {lights.map((name, i) => (
          <div key={name} className={`flex h-[20px] w-[365px] items-center ${i % 2 === 1 ? "bg-[#191919]" : ""}`}>
            <span className="ml-[94px]">
              <LightIcon />
            </span>
            <span className="ml-[6px] w-[167px]">{name}</span>
            <span className="text-[#6e6e6e]">RectLight</span>
          </div>
        ))}
      </div>
      <div className="flex h-[33px] items-center bg-[#242424] pl-[14px] text-[12.800px] text-[#b0b0b0]">189 actors</div>
    </div>
  );
}

function Details() {
  return (
    <div className="mt-[5px] flex flex-1 flex-col">
      <div className="flex h-[25px] text-[12.800px] text-[#c0c0c0]">
        <div className="flex w-[160px] items-center rounded-t-[4px] bg-[#242424] pb-[2px] pl-[5px] pr-[13px]">
          <DetailsIcon />
          <span className="ml-[7px] flex-1">Details</span>
          <X size={11} strokeWidth={3} />
        </div>
        <div className="flex items-center pb-[2px] pl-[8px]">
          <Globe size={15} fill="#8a8a8a" stroke="#222" />
          <span className="ml-[7px]">World Settings</span>
        </div>
      </div>
      <div className="flex-1 bg-[#242424] pt-[28px] text-center text-[12px] italic text-[#7c7c7c]">Select an object to view details.</div>
    </div>
  );
}

/* ================= STATUS BAR ================= */
function StatusBar() {
  return (
    <div className="flex h-[32px] items-center bg-[#242424] text-[12.800px] text-[#c0c0c0]">
      <div className="flex h-full w-[132px] items-center pl-[11px]">
        <svg width="16" height="16" viewBox="0 0 16 16" fill="#a8a8a8">
          <path d="M0 1h4l1 2h3v4a5 5 0 0 0-3 8H0z" />
          <circle cx="10" cy="9" r="3.500" fill="none" stroke="#cfcfcf" strokeWidth="1.300" />
          <path d="M7 12l-3 3" stroke="#cfcfcf" strokeWidth="1.300" />
        </svg>
        <span className="ml-[4px]">Content Drawer</span>
      </div>
      <StatusSep />
      <div className="flex h-full w-[103px] items-center pl-[12px]">
        <svg width="13" height="18" viewBox="0 0 13 18">
          <rect x="0" y="2" width="13" height="16" fill="#c8c8c8" />
          <path d="M2 0v3M5 0v3M8 0v3M11 0v3" stroke="#c8c8c8" />
          <path d="M3 9l3 2.500L3 14M7 15h4" stroke="#222" fill="none" />
        </svg>
        <span className="ml-[6px]">Output Log</span>
      </div>
      <StatusSep />
      <div className="flex h-full w-[367px] items-center pl-[14px]">
        <svg width="15" height="15" viewBox="0 0 15 15" fill="none" stroke="#c8c8c8">
          <rect x=".5" y=".5" width="14" height="14" />
          <path d="M3 5l3 2.500L3 10M7 11h4" />
        </svg>
        <span className="ml-[6px]">Cmd</span>
        <ChevronDown size={13} className="ml-[5px]" />
        <div className="ml-[10px] flex h-[22px] w-[268px] items-center rounded-[3px] border border-[#2c2c2c] bg-[#101010] pl-[8px] font-['Liberation_Mono',monospace] text-[11px] text-[#5e5e5e]">
          Enter Console Command
        </div>
      </div>
      <StatusSep />

      <div className="ml-auto flex h-full pr-[3px]">
        <StatusSep />
        <div className="relative flex h-full w-[130px] items-center pl-[14px]">
          <svg width="17" height="16" viewBox="0 0 17 16" fill="none" stroke="#b8b8b8">
            <path d="M3 .5h13v11H3zM3 11.500L.5 15.500M6 9V6M9 9V3M12 9V5" />
          </svg>
          <span className="ml-[2px]">Trace</span>
          <div className="ml-[19px] h-[14px] w-[14px] rounded-full border-[3px] border-[#bdbdbd] bg-[#333]" />
          <svg className="ml-[8px]" width="15" height="14" viewBox="0 0 15 14" fill="#a8a8a8">
            <rect x="0" y="1" width="15" height="13" rx="2" />
            <rect x="5" y="6" width="2" height="6" fill="#333" />
            <rect x="8" y="4" width="2" height="8" fill="#333" />
          </svg>
          <div className="absolute bottom-[3px] right-[56px] h-[5px] w-[5px] border-b border-r border-[#777]" />
        </div>
        <StatusSep />
        <div className="relative flex h-full w-[135px] items-center pl-[14px]">
          <svg width="15" height="14" viewBox="0 0 15 14" fill="#c0c0c0">
            <rect x="0" y="0" width="15" height="4" />
            <rect x="0" y="5" width="15" height="4" />
            <rect x="0" y="10" width="15" height="4" />
          </svg>
          <span className="ml-[3px]">Derived Data</span>
          <div className="absolute bottom-[3px] right-[14px] h-[5px] w-[5px] border-b border-r border-[#777]" />
        </div>
        <StatusSep />
        <div className="w-[10px]" />
        <StatusSep />
        <div className="relative flex h-full w-[232px] items-center pl-[11px]">
          <svg width="16" height="17" viewBox="0 0 16 17" fill="#b8b8b8">
            <path d="M0 0h9l3 3v5H8v7H0z" />
            <path d="M8 12l2.500 3L15 9" fill="none" stroke="#d8d8d8" strokeWidth="1.500" />
          </svg>
          <span className="ml-[3px]">All Saved</span>
          <div className="ml-[8px] h-[26px] w-px bg-[#333]" />
          <svg className="ml-[7px]" width="14" height="18" viewBox="0 0 14 18" fill="#d8d8d8">
            <circle cx="3" cy="3" r="2.500" />
            <circle cx="11" cy="3" r="2.500" />
            <circle cx="3" cy="15" r="2.500" />
            <path d="M3 3v12M11 5c0 4-8 3-8 7" fill="none" stroke="#d8d8d8" />
          </svg>
          <span className="ml-[6px]">Revision Control</span>
          <div className="absolute bottom-[3px] right-[3px] h-[5px] w-[5px] border-b border-r border-[#777]" />
        </div>
        <StatusSep />
        <div className="flex h-full w-[314px] items-center pl-[16px]">
          <div className="flex h-full w-[234px] flex-col justify-end pb-[2px]">
            <span className="leading-[14px]">Preparing Mesh Distance Fields (26)</span>
            <div className="mt-[1px] h-[7px] w-full bg-[#131313]">
              <div className="h-full w-[154px] bg-[repeating-linear-gradient(135deg,#0a78e0_0,#0a78e0_10px,#1b88ea_10px,#1b88ea_16px)]" />
            </div>
          </div>
          <span className="ml-[6px] text-[#aaa]">66%</span>
          <ChevronDown size={13} className="ml-[4px]" />
        </div>
      </div>
    </div>
  );
}

/* ================= APP ================= */
export default function App() {
  const menu = ["File", "Edit", "Window", "Tools", "Build", "Select", "Actor", "Help"];

  return (
    <div className="relative flex h-[1079px] w-[1923px] flex-col overflow-hidden bg-[#151515] font-['Roboto',sans-serif]">
      {/* TITLE */}
      <div className="flex h-[58px]">
        <div className="flex w-[55px] items-start pl-[7px] pt-[6px]">
          <UnrealLogo size={41} />
        </div>
        <div className="flex flex-col">
          <div className="flex h-[27px] items-center gap-[24px] pl-[12px] pb-[4px] text-[12.800px] text-[#c0c0c0]">
            {menu.map((m) => (
              <span key={m}>{m}</span>
            ))}
          </div>
          <div className="ml-[10px] flex h-[31px] w-[210px] items-center rounded-t-[4px] bg-[#242424] pl-[8px]">
            <svg width="16" height="17" viewBox="0 0 16 17">
              <path d="M2 14l3-5 1 2 2-9 2 9 1-2 3 5z" fill="#f29b16" />
              <rect x="0" y="15" width="16" height="2" fill="#a86a10" />
            </svg>
            <span className="ml-[9px] text-[12.800px] text-[#dcdcdc]">Floor_2</span>
          </div>
        </div>
        <div className="ml-auto flex h-[27px]">
          <div className="flex w-[142px] items-center justify-center rounded-b-[4px] bg-[#0f0f0f] text-[12.800px] text-[#b0b0b0]">Prototype13</div>
          <div className="flex w-[140px] items-center gap-[26px] pl-[25px] text-[#cfcfcf]">
            <Minus size={14} />
            <Copy size={11} className="ml-[3px]" />
            <X size={16} className="ml-[4px]" />
          </div>
        </div>
      </div>

      {/* TOOLBAR */}
      <div className="mr-[3px] flex h-[40px] items-center bg-[#242424] text-[12.800px] text-[#c0c0c0]">
        <div className="flex h-full w-[53px] items-center justify-center pr-[2px]">
          <SaveIcon />
        </div>
        <div className="h-[34px] w-px bg-[#151515]" />
        <div className="ml-[14px] flex h-[28px] w-[146px] items-center rounded-[4px] border border-[#333] bg-[#0f0f0f] pl-[7px]">
          <SelectionIcon />
          <span className="ml-[6px] text-[#cdcdcd]">Selection Mode</span>
          <ChevronDown size={13} className="ml-[4px]" />
        </div>
        <div className="ml-[15px] h-[34px] w-px bg-[#151515]" />
        <div className="ml-[15px] flex items-center">
          <AddActorIcon />
          <ChevronDown size={13} className="ml-[2px]" />
        </div>
        <div className="ml-[19px] flex items-center">
          <BlueprintIcon />
          <ChevronDown size={13} className="ml-[2px]" />
        </div>
        <div className="ml-[19px] flex items-center">
          <CinematicIcon />
          <ChevronDown size={13} className="ml-[2px]" />
        </div>
        <div className="ml-[22px] h-[34px] w-px bg-[#151515]" />
        <div className="ml-[15px] flex h-[28px] w-[141px] items-center rounded-[5px] bg-[#353535] pl-[9px]">
          <svg width="17" height="22" viewBox="0 0 17 22" fill="#83bd3f">
            <path d="M0 0l17 11L0 22z" />
          </svg>
          <svg className="ml-[12px]" width="16" height="20" viewBox="0 0 16 20" fill="#777">
            <rect x="0" y="0" width="3" height="20" />
            <path d="M5 0l11 10L5 20z" />
          </svg>
          <div className="ml-[13px] h-[20px] w-[14px] bg-[#777]" />
          <svg className="ml-[13px]" width="17" height="20" viewBox="0 0 17 20" fill="#777">
            <path d="M8.500 2L17 13H0z" />
            <rect x="0" y="15" width="17" height="3" />
          </svg>
          <div className="ml-[7px] h-full w-px bg-[#242424]" />
          <div className="ml-[9px] flex flex-col gap-[5px]">
            <div className="h-[3px] w-[3px] bg-[#bdbdbd]" />
            <div className="h-[3px] w-[3px] bg-[#bdbdbd]" />
            <div className="h-[3px] w-[3px] bg-[#bdbdbd]" />
          </div>
        </div>
        <div className="ml-[12px] h-[34px] w-px bg-[#151515]" />
        <div className="ml-[17px] flex items-center">
          <PlatformsIcon />
          <span className="ml-[3px]">Platforms</span>
          <ChevronDown size={13} className="ml-[4px]" />
        </div>
        <div className="ml-auto flex items-center pr-[18px]">
          <Settings size={20} />
          <span className="ml-[5px]">Settings</span>
          <ChevronDown size={13} className="ml-[3px]" />
        </div>
      </div>

      {/* MAIN */}
      <div className="flex h-[901px]">
        <div className="flex w-[1530px] flex-col pt-[4px]">
          <div className="h-px w-full bg-[#0a4a94]" />
          <div className="flex h-[892px] w-full">
            <div className="w-[4px]" />
            <div className="relative flex-1 bg-black">
              <div className="absolute left-0 top-0 h-0 w-0 border-r-[7px] border-t-[7px] border-r-transparent border-t-[#1a6fd8]" />
              <Scene />
              <ViewportBar />
              <div className="absolute left-[40px] top-[42px] text-[13px] leading-[20px] text-[#e8e8e8]">
                <div>Preparing Mesh Distance Fields (26)</div>
                <div>Preparing Mesh Cards (21)</div>
              </div>
              <div className="absolute left-[92px] top-[83px] text-[13px] text-[#141414]">'DisableAllScreenMessages' to suppress</div>
            </div>
          </div>
        </div>
        <div className="ml-[5px] flex w-[381px] flex-col pt-[4px]">
          <Outliner />
          <Details />
        </div>
      </div>

      <StatusBar />
      <div className="h-px bg-[#3a3a3a]" />
      <Taskbar />

      {/* window scrollbar strip */}
      <div className="absolute right-0 top-0 h-[115px] w-[3px] bg-[#3c3c3c]" />
      <div className="absolute right-0 top-[115px] h-[916px] w-[3px] bg-[#1b1b1b]" />
    </div>
  );
}
